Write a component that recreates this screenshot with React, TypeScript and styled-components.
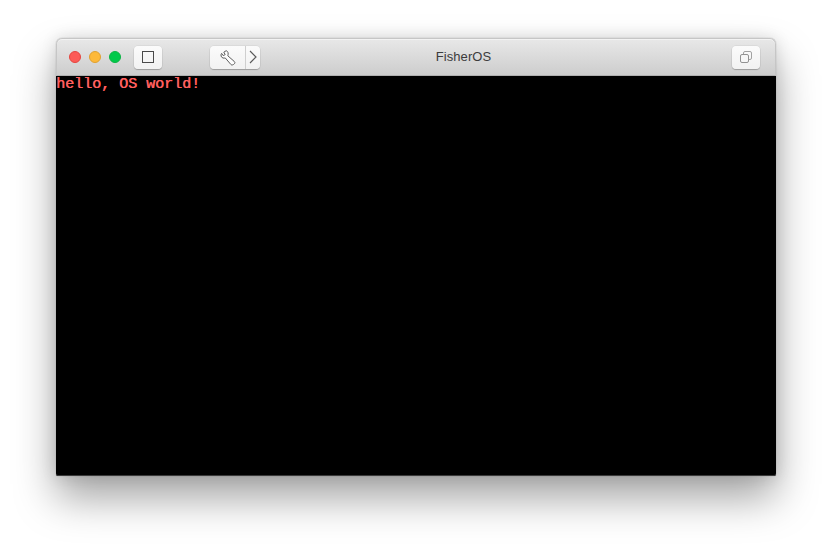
import styled, { createGlobalStyle } from "styled-components"

const Global = createGlobalStyle`
  html, body {
    margin: 0;
    padding: 0;
    background: #fff;
    overflow: hidden;
  }
`

const Page = styled.div`
  width: 832px;
  height: 550px;
  padding: 38px 56px 0;
  box-sizing: border-box;
  background: #fff;
`

const Window = styled.div`
  width: 720px;
  height: 438px;
  display: flex;
  flex-direction: column;
  border-radius: 6px 6px 2px 2px;
  box-shadow: 0 22px 42px rgba(0, 0, 0, 0.36), 0 0 16px rgba(0, 0, 0, 0.12), 0 0 1px rgba(0, 0, 0, 0.4);
`

const TitleBar = styled.div`
  position: relative;
  height: 38px;
  flex: none;
  box-sizing: border-box;
  padding: 0 15px 0 12px;
  display: flex;
  align-items: center;
  background: linear-gradient(#e8e8e8, #cdcdcd);
  border: 1px solid #c6c6c6;
  border-bottom-color: #b0b0b0;
  border-radius: 6px 6px 0 0;
  box-shadow: inset 0 1px 0 #f3f3f3;
`

const Lights = styled.div`
  display: flex;
  gap: 8px;
  margin-right: 13px;
`

const Light = styled.span<{ $color: string; $edge: string }>`
  width: 12px;
  height: 12px;
  border-radius: 50%;
  box-sizing: border-box;
  background: ${(p) => p.$color};
  border: 1px solid ${(p) => p.$edge};
`

const ToolButton = styled.div<{ $width: number }>`
  width: ${(p) => p.$width}px;
  height: 23px;
  flex: none;
  display: flex;
  align-items: center;
  justify-content: center;
  box-sizing: border-box;
  background: linear-gradient(#fbfbfb, #f2f2f2);
  border-radius: 4px;
  box-shadow: 0 1px 1px rgba(0, 0, 0, 0.22), 0 0 0 0.5px rgba(0, 0, 0, 0.08);
`

const Segmented = styled(ToolButton)`
  margin-left: 48px;
  justify-content: flex-start;
`

const WrenchPart = styled.div`
  width: 36px;
  height: 100%;
  display: flex;
  align-items: center;
  justify-content: center;
  padding-top: 1px;
  box-sizing: border-box;
  border-right: 1px solid #cfcfcf;
`

const ChevronPart = styled.div`
  flex: 1;
  display: flex;
  align-items: center;
  justify-content: center;
`

const Title = styled.div`
  position: absolute;
  left: 95px;
  right: 0;
  top: 10px;
  text-align: center;
  font: 13px/16px "Liberation Sans", Arial, sans-serif;
  letter-spacing: 0.1px;
  color: #3c3c3c;
`

const RightButton = styled(ToolButton)`
  margin-left: auto;
`

const Screen = styled.div`
  flex: 1;
  background: #000;
  border-radius: 0 0 2px 2px;
  box-shadow: inset 0 -1px 0 #3a3a3a;
`

const Line = styled.div`
  height: 16px;
  padding-top: 1px;
  font: 15px/16px "Liberation Mono", "Courier New", monospace;
  color: #ff5f5f;
  text-shadow: 0.6px 0 0 #ff5f5f;
  white-space: pre;
`

export default function App() {
  return (
    <Page>
      <Global />
      <Window>
        <TitleBar>
          <Lights>
            <Light $color="#fc5b57" $edge="#e5453f" />
            <Light $color="#fdb93a" $edge="#e0a131" />
            <Light $color="#00c94a" $edge="#0cb444" />
          </Lights>
          <ToolButton $width={28}>
            <svg width="12" height="12" viewBox="0 0 12 12">
              <rect x="0.5" y="0.5" width="11" height="11" fill="none" stroke="#4a4a4a" />
            </svg>
          </ToolButton>
          <Segmented $width={50}>
            <WrenchPart>
              <svg width="16" height="16" viewBox="0 0 16 16">
                <path
                  d="M6.2 0.7 L3.8 2.2 L5.2 4.6 L3.2 5.6 L1.6 3.4 C0.4 5 1 7.4 3 8 C3.8 8.2 4.6 8.2 5.2 7.9 L11 14.6 C12.2 15.8 15.4 13.8 14.8 12.2 C14.6 11.8 14.4 11.6 14.1 11.3 L7.8 5.8 C8.6 3.6 8.2 1.4 6.2 0.7 Z"
                  fill="#fdfdfd"
                  stroke="#5e5e5e"
                  strokeWidth="1"
                  strokeLinejoin="round"
                />
              </svg>
            </WrenchPart>
            <ChevronPart>
              <svg width="8" height="14" viewBox="0 0 8 14">
                <path d="M1 1 L7 7 L1 13" fill="none" stroke="#5a5a5a" strokeWidth="1.2" />
              </svg>
            </ChevronPart>
          </Segmented>
          <Title>FisherOS</Title>
          <RightButton $width={28}>
            <svg width="12" height="12" viewBox="0 0 12 12">
              <rect x="3.5" y="0.5" width="8" height="8" rx="1.5" fill="none" stroke="#a2a2a2" />
              <rect x="0.5" y="3.5" width="8" height="8" rx="1.5" fill="#f7f7f7" stroke="#929292" />
            </svg>
          </RightButton>
        </TitleBar>
        <Screen>
          <Line>hello, OS world!</Line>
        </Screen>
      </Window>
    </Page>
  )
}
